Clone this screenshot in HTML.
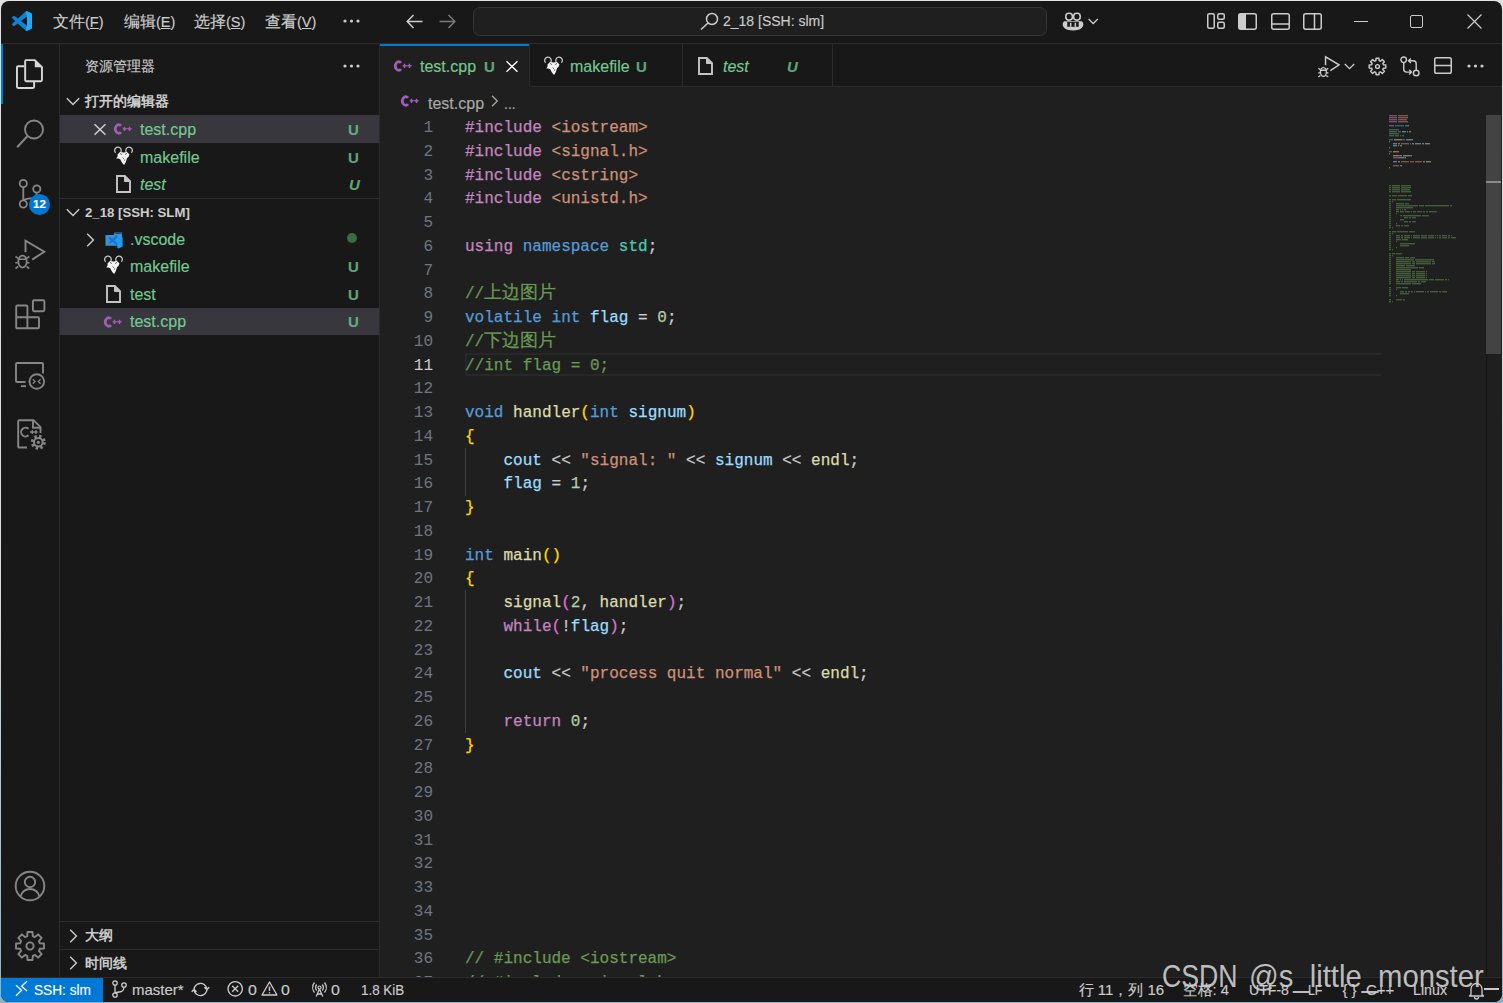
<!DOCTYPE html>
<html><head><meta charset="utf-8">
<style>
*{box-sizing:border-box;margin:0;padding:0}
html,body{width:1503px;height:1003px;overflow:hidden}
body{background:linear-gradient(#e2e2e2,#d8dadc 60%,#8eb0c6);position:relative;font-family:"Liberation Sans",sans-serif;color:#cccccc}
.a{position:absolute}
#win{position:absolute;left:1px;top:1px;width:1501px;height:1001px;background:#181818;border-radius:8px;overflow:hidden}
.t{position:absolute;white-space:pre;font-size:16px;line-height:20px;-webkit-text-stroke:0.15px}
.code{position:absolute;left:465px;-webkit-text-stroke:0.25px;font-family:"Liberation Mono",monospace;font-size:16.03px;white-space:pre;line-height:23.75px;color:#cccccc}
.ln{position:absolute;font-family:"Liberation Mono",monospace;font-size:16.03px;white-space:pre;line-height:23.75px;color:#6e7681;text-align:right;width:60px;left:373px}
.kw{color:#c586c0}.ty{color:#569cd6}.st{color:#ce9178}.nu{color:#b5cea8}.fn{color:#dcdcaa}.va{color:#9cdcfe}.ns{color:#4ec9b0}.cm{color:#6a9955}
.b1{color:#ffd700}.b2{color:#da70d6}.b3{color:#179fff}
.cj{font-size:17.5px;line-height:0}
svg{position:absolute;overflow:visible}
</style></head><body>
<div id="win"></div>

<div class="a" style="left:1px;top:43px;width:1501px;height:1px;background:#2b2b2b;"></div>
<div class="a" style="left:59px;top:44px;width:1px;height:933px;background:#2b2b2b;"></div>
<div class="a" style="left:379px;top:44px;width:1px;height:933px;background:#2b2b2b;"></div>
<div class="a" style="left:380px;top:86px;width:1122px;height:1px;background:#2b2b2b;"></div>
<div class="a" style="left:380px;top:87px;width:1122px;height:890px;background:#1f1f1f;"></div>
<div class="a" style="left:380px;top:44px;width:150px;height:43px;background:#1f1f1f;border-top:2px solid #0078d4"></div>
<div class="a" style="left:529px;top:44px;width:1px;height:42px;background:#2b2b2b;"></div>
<div class="a" style="left:682px;top:44px;width:1px;height:42px;background:#2b2b2b;"></div>
<div class="a" style="left:832px;top:44px;width:1px;height:42px;background:#2b2b2b;"></div>
<div class="a" style="left:60px;top:115px;width:319px;height:28px;background:#37373d;"></div>
<div class="a" style="left:60px;top:308px;width:319px;height:27px;background:#37373d;"></div>
<div class="a" style="left:60px;top:198px;width:319px;height:1px;background:#2b2b2b;"></div>
<div class="a" style="left:60px;top:921px;width:319px;height:1px;background:#2b2b2b;"></div>
<div class="a" style="left:60px;top:949px;width:319px;height:1px;background:#2b2b2b;"></div>
<div class="a" style="left:465px;top:353px;width:916px;height:23px;border:2px solid #282828;border-right:none"></div>
<div class="a" style="left:465px;top:448px;width:1px;height:48px;background:#404040;"></div>
<div class="a" style="left:465px;top:590px;width:1px;height:143px;background:#404040;"></div>
<div class="ln" style="top:117px">1
2
3
4
5
6
7
8
9
10
<span style="color:#cccccc">11</span>
12
13
14
15
16
17
18
19
20
21
22
23
24
25
26
27
28
29
30
31
32
33
34
35
36
37</div>
<div class="code" style="top:117px"><span class="kw">#include</span> <span class="st">&lt;iostream&gt;</span>
<span class="kw">#include</span> <span class="st">&lt;signal.h&gt;</span>
<span class="kw">#include</span> <span class="st">&lt;cstring&gt;</span>
<span class="kw">#include</span> <span class="st">&lt;unistd.h&gt;</span>

<span class="kw">using</span> <span class="ty">namespace</span> <span class="ns">std</span>;

<span class="cm">//<span class="cj">上边图片</span></span>
<span class="ty">volatile</span> <span class="ty">int</span> <span class="va">flag</span> = <span class="nu">0</span>;
<span class="cm">//<span class="cj">下边图片</span></span>
<span class="cm">//int flag = 0;</span>

<span class="ty">void</span> <span class="fn">handler</span><span class="b1">(</span><span class="ty">int</span> <span class="va">signum</span><span class="b1">)</span>
<span class="b1">{</span>
    <span class="va">cout</span> &lt;&lt; <span class="st">"signal: "</span> &lt;&lt; <span class="va">signum</span> &lt;&lt; <span class="fn">endl</span>;
    <span class="va">flag</span> = <span class="nu">1</span>;
<span class="b1">}</span>

<span class="ty">int</span> <span class="fn">main</span><span class="b1">()</span>
<span class="b1">{</span>
    <span class="fn">signal</span><span class="b2">(</span><span class="nu">2</span>, <span class="fn">handler</span><span class="b2">)</span>;
    <span class="kw">while</span><span class="b2">(</span>!<span class="va">flag</span><span class="b2">)</span>;

    <span class="va">cout</span> &lt;&lt; <span class="st">"process quit normal"</span> &lt;&lt; <span class="fn">endl</span>;

    <span class="kw">return</span> <span class="nu">0</span>;
<span class="b1">}</span>








<span class="cm">// #include &lt;iostream&gt;</span>
<span class="cm">// #include &lt;signal.h&gt;</span></div>
<svg style="left:1389px;top:115px" width="100" height="190" viewBox="0 0 100 190"><g opacity="0.5"><rect x="0" y="0" width="8" height="1.4" fill="#c586c0"/><rect x="9" y="0" width="10" height="1.4" fill="#ce9178"/><rect x="0" y="2" width="8" height="1.4" fill="#c586c0"/><rect x="9" y="2" width="10" height="1.4" fill="#ce9178"/><rect x="0" y="4" width="8" height="1.4" fill="#c586c0"/><rect x="9" y="4" width="9" height="1.4" fill="#ce9178"/><rect x="0" y="6" width="8" height="1.4" fill="#c586c0"/><rect x="9" y="6" width="10" height="1.4" fill="#ce9178"/><rect x="0" y="10" width="5" height="1.4" fill="#c586c0"/><rect x="6" y="10" width="9" height="1.4" fill="#569cd6"/><rect x="16" y="10" width="3" height="1.4" fill="#4ec9b0"/><rect x="19" y="10" width="1" height="1.4" fill="#cccccc"/><rect x="0" y="14" width="10" height="1.4" fill="#6a9955"/><rect x="0" y="16" width="8" height="1.4" fill="#569cd6"/><rect x="9" y="16" width="3" height="1.4" fill="#569cd6"/><rect x="13" y="16" width="4" height="1.4" fill="#9cdcfe"/><rect x="18" y="16" width="1" height="1.4" fill="#cccccc"/><rect x="20" y="16" width="1" height="1.4" fill="#b5cea8"/><rect x="21" y="16" width="1" height="1.4" fill="#cccccc"/><rect x="0" y="18" width="10" height="1.4" fill="#6a9955"/><rect x="0" y="20" width="5" height="1.4" fill="#6a9955"/><rect x="6" y="20" width="4" height="1.4" fill="#6a9955"/><rect x="11" y="20" width="1" height="1.4" fill="#6a9955"/><rect x="13" y="20" width="2" height="1.4" fill="#6a9955"/><rect x="0" y="24" width="4" height="1.4" fill="#569cd6"/><rect x="5" y="24" width="7" height="1.4" fill="#dcdcaa"/><rect x="12" y="24" width="1" height="1.4" fill="#ffd700"/><rect x="13" y="24" width="3" height="1.4" fill="#569cd6"/><rect x="17" y="24" width="6" height="1.4" fill="#9cdcfe"/><rect x="23" y="24" width="1" height="1.4" fill="#ffd700"/><rect x="0" y="26" width="1" height="1.4" fill="#ffd700"/><rect x="4" y="28" width="4" height="1.4" fill="#9cdcfe"/><rect x="9" y="28" width="2" height="1.4" fill="#cccccc"/><rect x="12" y="28" width="8" height="1.4" fill="#ce9178"/><rect x="21" y="28" width="1" height="1.4" fill="#ce9178"/><rect x="23" y="28" width="2" height="1.4" fill="#cccccc"/><rect x="26" y="28" width="6" height="1.4" fill="#9cdcfe"/><rect x="33" y="28" width="2" height="1.4" fill="#cccccc"/><rect x="36" y="28" width="4" height="1.4" fill="#dcdcaa"/><rect x="40" y="28" width="1" height="1.4" fill="#cccccc"/><rect x="4" y="30" width="4" height="1.4" fill="#9cdcfe"/><rect x="9" y="30" width="1" height="1.4" fill="#cccccc"/><rect x="11" y="30" width="1" height="1.4" fill="#b5cea8"/><rect x="12" y="30" width="1" height="1.4" fill="#cccccc"/><rect x="0" y="32" width="1" height="1.4" fill="#ffd700"/><rect x="0" y="36" width="3" height="1.4" fill="#569cd6"/><rect x="4" y="36" width="4" height="1.4" fill="#dcdcaa"/><rect x="8" y="36" width="2" height="1.4" fill="#ffd700"/><rect x="0" y="38" width="1" height="1.4" fill="#ffd700"/><rect x="4" y="40" width="6" height="1.4" fill="#dcdcaa"/><rect x="10" y="40" width="1" height="1.4" fill="#da70d6"/><rect x="11" y="40" width="1" height="1.4" fill="#b5cea8"/><rect x="12" y="40" width="1" height="1.4" fill="#cccccc"/><rect x="14" y="40" width="7" height="1.4" fill="#dcdcaa"/><rect x="21" y="40" width="1" height="1.4" fill="#da70d6"/><rect x="22" y="40" width="1" height="1.4" fill="#cccccc"/><rect x="4" y="42" width="5" height="1.4" fill="#c586c0"/><rect x="9" y="42" width="1" height="1.4" fill="#da70d6"/><rect x="10" y="42" width="1" height="1.4" fill="#cccccc"/><rect x="11" y="42" width="4" height="1.4" fill="#9cdcfe"/><rect x="15" y="42" width="1" height="1.4" fill="#da70d6"/><rect x="16" y="42" width="1" height="1.4" fill="#cccccc"/><rect x="4" y="46" width="4" height="1.4" fill="#9cdcfe"/><rect x="9" y="46" width="2" height="1.4" fill="#cccccc"/><rect x="12" y="46" width="8" height="1.4" fill="#ce9178"/><rect x="21" y="46" width="4" height="1.4" fill="#ce9178"/><rect x="26" y="46" width="7" height="1.4" fill="#ce9178"/><rect x="34" y="46" width="2" height="1.4" fill="#cccccc"/><rect x="37" y="46" width="4" height="1.4" fill="#dcdcaa"/><rect x="41" y="46" width="1" height="1.4" fill="#cccccc"/><rect x="4" y="50" width="6" height="1.4" fill="#c586c0"/><rect x="11" y="50" width="1" height="1.4" fill="#b5cea8"/><rect x="12" y="50" width="1" height="1.4" fill="#cccccc"/><rect x="0" y="52" width="1" height="1.4" fill="#ffd700"/><rect x="0" y="70" width="2" height="1.4" fill="#6a9955"/><rect x="3" y="70" width="8" height="1.4" fill="#6a9955"/><rect x="12" y="70" width="10" height="1.4" fill="#6a9955"/><rect x="0" y="72" width="2" height="1.4" fill="#6a9955"/><rect x="3" y="72" width="8" height="1.4" fill="#6a9955"/><rect x="12" y="72" width="10" height="1.4" fill="#6a9955"/><rect x="0" y="74" width="2" height="1.4" fill="#6a9955"/><rect x="3" y="74" width="8" height="1.4" fill="#6a9955"/><rect x="12" y="74" width="9" height="1.4" fill="#6a9955"/><rect x="0" y="76" width="2" height="1.4" fill="#6a9955"/><rect x="3" y="76" width="8" height="1.4" fill="#6a9955"/><rect x="12" y="76" width="10" height="1.4" fill="#6a9955"/><rect x="0" y="80" width="2" height="1.4" fill="#6a9955"/><rect x="3" y="80" width="5" height="1.4" fill="#6a9955"/><rect x="9" y="80" width="9" height="1.4" fill="#6a9955"/><rect x="19" y="80" width="4" height="1.4" fill="#6a9955"/><rect x="0" y="84" width="2" height="1.4" fill="#6a9955"/><rect x="3" y="84" width="4" height="1.4" fill="#6a9955"/><rect x="8" y="84" width="14" height="1.4" fill="#6a9955"/><rect x="0" y="86" width="2" height="1.4" fill="#6a9955"/><rect x="3" y="86" width="1" height="1.4" fill="#6a9955"/><rect x="0" y="88" width="2" height="1.4" fill="#6a9955"/><rect x="7" y="88" width="8" height="1.4" fill="#6a9955"/><rect x="16" y="88" width="4" height="1.4" fill="#6a9955"/><rect x="0" y="90" width="2" height="1.4" fill="#6a9955"/><rect x="7" y="90" width="22" height="1.4" fill="#6a9955"/><rect x="30" y="90" width="5" height="1.4" fill="#6a9955"/><rect x="36" y="90" width="24" height="1.4" fill="#6a9955"/><rect x="61" y="90" width="2" height="1.4" fill="#6a9955"/><rect x="0" y="92" width="2" height="1.4" fill="#6a9955"/><rect x="7" y="92" width="17" height="1.4" fill="#6a9955"/><rect x="0" y="94" width="2" height="1.4" fill="#6a9955"/><rect x="7" y="94" width="3" height="1.4" fill="#6a9955"/><rect x="11" y="94" width="1" height="1.4" fill="#6a9955"/><rect x="13" y="94" width="1" height="1.4" fill="#6a9955"/><rect x="15" y="94" width="2" height="1.4" fill="#6a9955"/><rect x="0" y="96" width="2" height="1.4" fill="#6a9955"/><rect x="7" y="96" width="3" height="1.4" fill="#6a9955"/><rect x="11" y="96" width="4" height="1.4" fill="#6a9955"/><rect x="16" y="96" width="5" height="1.4" fill="#6a9955"/><rect x="22" y="96" width="1" height="1.4" fill="#6a9955"/><rect x="24" y="96" width="3" height="1.4" fill="#6a9955"/><rect x="28" y="96" width="5" height="1.4" fill="#6a9955"/><rect x="34" y="96" width="2" height="1.4" fill="#6a9955"/><rect x="37" y="96" width="2" height="1.4" fill="#6a9955"/><rect x="40" y="96" width="8" height="1.4" fill="#6a9955"/><rect x="0" y="98" width="2" height="1.4" fill="#6a9955"/><rect x="7" y="98" width="1" height="1.4" fill="#6a9955"/><rect x="0" y="100" width="2" height="1.4" fill="#6a9955"/><rect x="11" y="100" width="2" height="1.4" fill="#6a9955"/><rect x="14" y="100" width="18" height="1.4" fill="#6a9955"/><rect x="33" y="100" width="7" height="1.4" fill="#6a9955"/><rect x="0" y="102" width="2" height="1.4" fill="#6a9955"/><rect x="15" y="102" width="4" height="1.4" fill="#6a9955"/><rect x="20" y="102" width="2" height="1.4" fill="#6a9955"/><rect x="23" y="102" width="4" height="1.4" fill="#6a9955"/><rect x="0" y="104" width="2" height="1.4" fill="#6a9955"/><rect x="11" y="104" width="4" height="1.4" fill="#6a9955"/><rect x="0" y="106" width="2" height="1.4" fill="#6a9955"/><rect x="15" y="106" width="4" height="1.4" fill="#6a9955"/><rect x="20" y="106" width="2" height="1.4" fill="#6a9955"/><rect x="23" y="106" width="4" height="1.4" fill="#6a9955"/><rect x="0" y="108" width="2" height="1.4" fill="#6a9955"/><rect x="7" y="108" width="1" height="1.4" fill="#6a9955"/><rect x="0" y="110" width="2" height="1.4" fill="#6a9955"/><rect x="7" y="110" width="4" height="1.4" fill="#6a9955"/><rect x="12" y="110" width="2" height="1.4" fill="#6a9955"/><rect x="15" y="110" width="5" height="1.4" fill="#6a9955"/><rect x="0" y="112" width="2" height="1.4" fill="#6a9955"/><rect x="3" y="112" width="1" height="1.4" fill="#6a9955"/><rect x="0" y="116" width="2" height="1.4" fill="#6a9955"/><rect x="3" y="116" width="4" height="1.4" fill="#6a9955"/><rect x="8" y="116" width="11" height="1.4" fill="#6a9955"/><rect x="20" y="116" width="6" height="1.4" fill="#6a9955"/><rect x="0" y="118" width="2" height="1.4" fill="#6a9955"/><rect x="3" y="118" width="1" height="1.4" fill="#6a9955"/><rect x="0" y="120" width="2" height="1.4" fill="#6a9955"/><rect x="7" y="120" width="4" height="1.4" fill="#6a9955"/><rect x="12" y="120" width="2" height="1.4" fill="#6a9955"/><rect x="15" y="120" width="6" height="1.4" fill="#6a9955"/><rect x="22" y="120" width="1" height="1.4" fill="#6a9955"/><rect x="24" y="120" width="7" height="1.4" fill="#6a9955"/><rect x="32" y="120" width="6" height="1.4" fill="#6a9955"/><rect x="39" y="120" width="6" height="1.4" fill="#6a9955"/><rect x="46" y="120" width="1" height="1.4" fill="#6a9955"/><rect x="48" y="120" width="1" height="1.4" fill="#6a9955"/><rect x="50" y="120" width="2" height="1.4" fill="#6a9955"/><rect x="53" y="120" width="5" height="1.4" fill="#6a9955"/><rect x="59" y="120" width="2" height="1.4" fill="#6a9955"/><rect x="62" y="120" width="1" height="1.4" fill="#6a9955"/><rect x="0" y="122" width="2" height="1.4" fill="#6a9955"/><rect x="7" y="122" width="4" height="1.4" fill="#6a9955"/><rect x="12" y="122" width="2" height="1.4" fill="#6a9955"/><rect x="15" y="122" width="6" height="1.4" fill="#6a9955"/><rect x="22" y="122" width="1" height="1.4" fill="#6a9955"/><rect x="24" y="122" width="7" height="1.4" fill="#6a9955"/><rect x="32" y="122" width="6" height="1.4" fill="#6a9955"/><rect x="39" y="122" width="6" height="1.4" fill="#6a9955"/><rect x="46" y="122" width="1" height="1.4" fill="#6a9955"/><rect x="48" y="122" width="1" height="1.4" fill="#6a9955"/><rect x="50" y="122" width="2" height="1.4" fill="#6a9955"/><rect x="53" y="122" width="5" height="1.4" fill="#6a9955"/><rect x="59" y="122" width="2" height="1.4" fill="#6a9955"/><rect x="62" y="122" width="5" height="1.4" fill="#6a9955"/><rect x="0" y="124" width="2" height="1.4" fill="#6a9955"/><rect x="7" y="124" width="5" height="1.4" fill="#6a9955"/><rect x="13" y="124" width="6" height="1.4" fill="#6a9955"/><rect x="0" y="126" width="2" height="1.4" fill="#6a9955"/><rect x="7" y="126" width="1" height="1.4" fill="#6a9955"/><rect x="0" y="128" width="2" height="1.4" fill="#6a9955"/><rect x="11" y="128" width="15" height="1.4" fill="#6a9955"/><rect x="0" y="130" width="2" height="1.4" fill="#6a9955"/><rect x="11" y="130" width="9" height="1.4" fill="#6a9955"/><rect x="0" y="132" width="2" height="1.4" fill="#6a9955"/><rect x="7" y="132" width="1" height="1.4" fill="#6a9955"/><rect x="0" y="134" width="2" height="1.4" fill="#6a9955"/><rect x="3" y="134" width="1" height="1.4" fill="#6a9955"/><rect x="0" y="138" width="2" height="1.4" fill="#6a9955"/><rect x="3" y="138" width="3" height="1.4" fill="#6a9955"/><rect x="7" y="138" width="6" height="1.4" fill="#6a9955"/><rect x="0" y="140" width="2" height="1.4" fill="#6a9955"/><rect x="3" y="140" width="1" height="1.4" fill="#6a9955"/><rect x="0" y="142" width="2" height="1.4" fill="#6a9955"/><rect x="7" y="142" width="8" height="1.4" fill="#6a9955"/><rect x="16" y="142" width="4" height="1.4" fill="#6a9955"/><rect x="21" y="142" width="5" height="1.4" fill="#6a9955"/><rect x="0" y="144" width="2" height="1.4" fill="#6a9955"/><rect x="7" y="144" width="18" height="1.4" fill="#6a9955"/><rect x="26" y="144" width="19" height="1.4" fill="#6a9955"/><rect x="0" y="146" width="2" height="1.4" fill="#6a9955"/><rect x="7" y="146" width="15" height="1.4" fill="#6a9955"/><rect x="23" y="146" width="3" height="1.4" fill="#6a9955"/><rect x="27" y="146" width="15" height="1.4" fill="#6a9955"/><rect x="43" y="146" width="3" height="1.4" fill="#6a9955"/><rect x="0" y="148" width="2" height="1.4" fill="#6a9955"/><rect x="7" y="148" width="15" height="1.4" fill="#6a9955"/><rect x="23" y="148" width="3" height="1.4" fill="#6a9955"/><rect x="27" y="148" width="15" height="1.4" fill="#6a9955"/><rect x="43" y="148" width="3" height="1.4" fill="#6a9955"/><rect x="0" y="150" width="2" height="1.4" fill="#6a9955"/><rect x="7" y="150" width="9" height="1.4" fill="#6a9955"/><rect x="17" y="150" width="9" height="1.4" fill="#6a9955"/><rect x="0" y="152" width="2" height="1.4" fill="#6a9955"/><rect x="7" y="152" width="22" height="1.4" fill="#6a9955"/><rect x="30" y="152" width="5" height="1.4" fill="#6a9955"/><rect x="0" y="154" width="2" height="1.4" fill="#6a9955"/><rect x="7" y="154" width="15" height="1.4" fill="#6a9955"/><rect x="0" y="156" width="2" height="1.4" fill="#6a9955"/><rect x="7" y="156" width="15" height="1.4" fill="#6a9955"/><rect x="23" y="156" width="3" height="1.4" fill="#6a9955"/><rect x="27" y="156" width="9" height="1.4" fill="#6a9955"/><rect x="37" y="156" width="1" height="1.4" fill="#6a9955"/><rect x="0" y="158" width="2" height="1.4" fill="#6a9955"/><rect x="7" y="158" width="15" height="1.4" fill="#6a9955"/><rect x="23" y="158" width="3" height="1.4" fill="#6a9955"/><rect x="27" y="158" width="9" height="1.4" fill="#6a9955"/><rect x="37" y="158" width="1" height="1.4" fill="#6a9955"/><rect x="0" y="160" width="2" height="1.4" fill="#6a9955"/><rect x="7" y="160" width="15" height="1.4" fill="#6a9955"/><rect x="23" y="160" width="3" height="1.4" fill="#6a9955"/><rect x="27" y="160" width="9" height="1.4" fill="#6a9955"/><rect x="37" y="160" width="1" height="1.4" fill="#6a9955"/><rect x="0" y="162" width="2" height="1.4" fill="#6a9955"/><rect x="7" y="162" width="15" height="1.4" fill="#6a9955"/><rect x="23" y="162" width="3" height="1.4" fill="#6a9955"/><rect x="27" y="162" width="9" height="1.4" fill="#6a9955"/><rect x="37" y="162" width="1" height="1.4" fill="#6a9955"/><rect x="0" y="164" width="2" height="1.4" fill="#6a9955"/><rect x="7" y="164" width="3" height="1.4" fill="#6a9955"/><rect x="11" y="164" width="1" height="1.4" fill="#6a9955"/><rect x="13" y="164" width="1" height="1.4" fill="#6a9955"/><rect x="15" y="164" width="24" height="1.4" fill="#6a9955"/><rect x="40" y="164" width="5" height="1.4" fill="#6a9955"/><rect x="46" y="164" width="9" height="1.4" fill="#6a9955"/><rect x="56" y="164" width="2" height="1.4" fill="#6a9955"/><rect x="59" y="164" width="1" height="1.4" fill="#6a9955"/><rect x="0" y="166" width="2" height="1.4" fill="#6a9955"/><rect x="7" y="166" width="4" height="1.4" fill="#6a9955"/><rect x="12" y="166" width="2" height="1.4" fill="#6a9955"/><rect x="15" y="166" width="13" height="1.4" fill="#6a9955"/><rect x="29" y="166" width="2" height="1.4" fill="#6a9955"/><rect x="32" y="166" width="5" height="1.4" fill="#6a9955"/><rect x="0" y="168" width="2" height="1.4" fill="#6a9955"/><rect x="7" y="168" width="15" height="1.4" fill="#6a9955"/><rect x="23" y="168" width="9" height="1.4" fill="#6a9955"/><rect x="0" y="172" width="2" height="1.4" fill="#6a9955"/><rect x="7" y="172" width="5" height="1.4" fill="#6a9955"/><rect x="13" y="172" width="6" height="1.4" fill="#6a9955"/><rect x="0" y="174" width="2" height="1.4" fill="#6a9955"/><rect x="7" y="174" width="1" height="1.4" fill="#6a9955"/><rect x="0" y="176" width="2" height="1.4" fill="#6a9955"/><rect x="11" y="176" width="4" height="1.4" fill="#6a9955"/><rect x="16" y="176" width="2" height="1.4" fill="#6a9955"/><rect x="19" y="176" width="2" height="1.4" fill="#6a9955"/><rect x="22" y="176" width="2" height="1.4" fill="#6a9955"/><rect x="25" y="176" width="1" height="1.4" fill="#6a9955"/><rect x="27" y="176" width="8" height="1.4" fill="#6a9955"/><rect x="36" y="176" width="1" height="1.4" fill="#6a9955"/><rect x="38" y="176" width="2" height="1.4" fill="#6a9955"/><rect x="41" y="176" width="8" height="1.4" fill="#6a9955"/><rect x="50" y="176" width="2" height="1.4" fill="#6a9955"/><rect x="53" y="176" width="5" height="1.4" fill="#6a9955"/><rect x="0" y="178" width="2" height="1.4" fill="#6a9955"/><rect x="11" y="178" width="9" height="1.4" fill="#6a9955"/><rect x="0" y="180" width="2" height="1.4" fill="#6a9955"/><rect x="7" y="180" width="1" height="1.4" fill="#6a9955"/><rect x="0" y="184" width="2" height="1.4" fill="#6a9955"/><rect x="7" y="184" width="6" height="1.4" fill="#6a9955"/><rect x="14" y="184" width="2" height="1.4" fill="#6a9955"/><rect x="0" y="186" width="2" height="1.4" fill="#6a9955"/><rect x="3" y="186" width="1" height="1.4" fill="#6a9955"/></g></svg>
<div class="a" style="left:1486px;top:115px;width:15px;height:239px;background:#434343;"></div>
<div class="a" style="left:1486px;top:181px;width:15px;height:2px;background:#8a8a8a;"></div>
<div class="a" style="left:1486px;top:354px;width:1px;height:623px;background:#141414;"></div>
<div class="a" style="left:1px;top:977px;width:1501px;height:1px;background:#2b2b2b;"></div>
<div class="a" style="left:1px;top:978px;width:102px;height:24px;background:#0078d4;border-bottom-left-radius:8px"></div>
<div class="a" style="left:103px;top:978px;width:1399px;height:24px;background:#181818;border-bottom-right-radius:8px"></div>
<svg style="left:12px;top:11px" width="20" height="20" viewBox="0 0 100 100"><path fill="#0b84d8" d="M96.46 10.8L75.86.87a6.2 6.2 0 0 0-7.08 1.2L29.35 38.04 12.19 25.01a4.140 4.14 0 0 0-5.29.24l-5.5 5a4.14 4.14 0 0 0 0 6.14L16.25 50 1.36 63.58a4.14 4.14 0 0 0 0 6.14l5.5 5a4.14 4.14 0 0 0 5.29.24l17.16-13.03 39.43 35.96a6.2 6.2 0 0 0 7.08 1.2l20.6-9.91A6.2 6.2 0 0 0 100 83.59V16.41a6.2 6.2 0 0 0-3.54-5.61zM75.02 72.7L45.1 50l29.91-22.7z"/><path fill="#24a9f2" d="M68.77 97.92a6.2 6.2 0 0 0 7.1 1.2l20.59-9.9A6.2 6.2 0 0 0 100 83.59V16.41a6.2 6.2 0 0 0-3.54-5.61L75.86.87a6.2 6.2 0 0 0-7.09 1.21L75.02 27.3v45.4z"/></svg>
<div class="t" style="left:53px;top:12px">文件<span style="font-size:14.5px">(<u>F</u>)</span></div>
<div class="t" style="left:124px;top:12px">编辑<span style="font-size:14.5px">(<u>E</u>)</span></div>
<div class="t" style="left:194px;top:12px">选择<span style="font-size:14.5px">(<u>S</u>)</span></div>
<div class="t" style="left:265px;top:12px">查看<span style="font-size:14.5px">(<u>V</u>)</span></div>
<svg style="left:343px;top:19px" width="17" height="4" viewBox="0 0 17 4"><circle cx="2" cy="2" r="1.6" fill="#cccccc"/><circle cx="8.5" cy="2" r="1.6" fill="#cccccc"/><circle cx="15" cy="2" r="1.6" fill="#cccccc"/></svg>
<svg style="left:406px;top:14px" width="17" height="15" viewBox="0 0 17 15"><path d="M16.5 7.5H1.5M7.5 1L1.2 7.5 7.5 14" fill="none" stroke="#cccccc" stroke-width="1.5"/></svg>
<svg style="left:439px;top:14px" width="17" height="15" viewBox="0 0 17 15"><path d="M0.5 7.5H15.5M9.5 1L15.8 7.5 9.5 14" fill="none" stroke="#7a7a7a" stroke-width="1.5"/></svg>
<div class="a" style="left:473px;top:7px;width:574px;height:29px;border:1px solid #353535;background:#1f1f1f;border-radius:7px"></div>
<svg style="left:700px;top:12px" width="19" height="18" viewBox="0 0 19 18"><circle cx="12" cy="7" r="5.5" fill="none" stroke="#cccccc" stroke-width="1.5"/><path d="M8 11L1 17.5" stroke="#cccccc" stroke-width="1.6" fill="none"/></svg>
<div class="t" style="left:723px;top:11px;font-size:14px">2_18 [SSH: slm]</div>
<svg style="left:1062px;top:11.5px" width="22" height="19" viewBox="0 0 22 19"><path d="M2.2 9.2C1 10 .7 11.3.7 12.8c0 2.8 3.5 5.7 10.3 5.7s10.3-2.9 10.3-5.7c0-1.5-.3-2.8-1.5-3.6z" fill="#cccccc"/><rect x="3.8" y="1.3" width="6.6" height="6.8" rx="3" fill="#181818" stroke="#cccccc" stroke-width="1.6"/><rect x="11.6" y="1.3" width="6.6" height="6.8" rx="3" fill="#181818" stroke="#cccccc" stroke-width="1.6"/><rect x="5.3" y="9.9" width="11.4" height="4.9" fill="#181818"/><rect x="7.9" y="10.7" width="1.5" height="4.1" fill="#cccccc"/><rect x="12.6" y="10.7" width="1.5" height="4.1" fill="#cccccc"/></svg>
<svg style="left:1088px;top:17.5px" width="11" height="7" viewBox="0 0 11 7"><path d="M0.6 1L5.2 5.5 9.8 1" fill="none" stroke="#cccccc" stroke-width="1.3"/></svg>
<svg style="left:1207px;top:13px" width="18" height="16" viewBox="0 0 18 16"><rect x="0.75" y="0.75" width="6.5" height="14.5" rx="1.5" fill="none" stroke="#cccccc" stroke-width="1.5"/><rect x="10.75" y="0.75" width="6.5" height="5.5" rx="1.5" fill="none" stroke="#cccccc" stroke-width="1.5"/><rect x="10.75" y="9.25" width="6.5" height="6" rx="1.5" fill="none" stroke="#cccccc" stroke-width="1.5"/></svg>
<svg style="left:1238px;top:13px" width="19" height="17" viewBox="0 0 19 17"><rect x="0.75" y="0.75" width="17.5" height="15.5" rx="2" fill="none" stroke="#cccccc" stroke-width="1.5"/><rect x="1" y="1" width="7" height="15" fill="#cccccc"/></svg>
<svg style="left:1271px;top:13px" width="19" height="17" viewBox="0 0 19 17"><rect x="0.75" y="0.75" width="17.5" height="15.5" rx="2" fill="none" stroke="#cccccc" stroke-width="1.5"/><path d="M1 11H18" stroke="#cccccc" stroke-width="1.5"/></svg>
<svg style="left:1303px;top:13px" width="19" height="17" viewBox="0 0 19 17"><rect x="0.75" y="0.75" width="17.5" height="15.5" rx="2" fill="none" stroke="#cccccc" stroke-width="1.5"/><path d="M11.5 1V16" stroke="#cccccc" stroke-width="1.5"/></svg>
<div class="a" style="left:1354px;top:21px;width:14px;height:1px;background:#cccccc;"></div>
<div class="a" style="left:1410px;top:15px;width:13px;height:13px;border:1px solid #cccccc;border-radius:2px"></div>
<svg style="left:1467px;top:14px" width="15" height="15" viewBox="0 0 15 15"><path d="M0.5 0.5L14.5 14.5M14.5 0.5L0.5 14.5" stroke="#cccccc" stroke-width="1.2"/></svg>
<div class="a" style="left:1px;top:44px;width:2px;height:60px;background:#0078d4;"></div>
<svg style="left:16px;top:59px" width="27" height="30" viewBox="0 0 28 31"><path d="M8.5 7.5H2.2C1.5 7.5 1 8 1 8.7v20.1c0 .7.5 1.2 1.2 1.2H17.6c.7 0 1.2-.5 1.2-1.2V23" fill="none" stroke="#d7d7d7" stroke-width="2"/><path d="M9.5 1.1H19.5L26.9 8.5V21.8c0 .7-.5 1.2-1.2 1.2H10.7c-.7 0-1.2-.5-1.2-1.2V2.3c0-.7.5-1.2 1.2-1.2z" fill="none" stroke="#d7d7d7" stroke-width="2"/><path d="M19.5 1.5V8.5H26.5z" fill="#d7d7d7"/></svg>
<svg style="left:16px;top:119px" width="30" height="30" viewBox="0 0 30 30"><circle cx="18" cy="10.5" r="9" fill="none" stroke="#868686" stroke-width="1.9"/><path d="M11.5 17L1.2 28.2" stroke="#868686" stroke-width="2" fill="none"/></svg>
<svg style="left:18px;top:178px" width="24" height="30" viewBox="0 0 24 30"><circle cx="5.3" cy="5.5" r="3.6" fill="none" stroke="#868686" stroke-width="1.8"/><circle cx="18.8" cy="11" r="3.6" fill="none" stroke="#868686" stroke-width="1.8"/><circle cx="5.3" cy="26" r="3.6" fill="none" stroke="#868686" stroke-width="1.8"/><path d="M5.3 9.1V22.4M18.8 14.6c0 4-2.2 5.5-6 5.8-3.5.3-6 .8-7.5 2.2" fill="none" stroke="#868686" stroke-width="1.8"/></svg>
<div class="a" style="left:29px;top:194px;width:21px;height:21px;border-radius:50%;background:#0078d4"></div>
<div class="t" style="left:29px;top:194px;width:21px;text-align:center;font-size:11.5px;font-weight:bold;line-height:21px;color:#ffffff">12</div>
<svg style="left:15px;top:238px" width="31" height="32" viewBox="0 0 31 32"><path d="M10.5 14.3V2.6L29.3 13.7 17.2 21.6" fill="none" stroke="#868686" stroke-width="1.9" stroke-linejoin="miter"/><ellipse cx="7.5" cy="23.6" rx="4.2" ry="6" fill="none" stroke="#868686" stroke-width="1.8"/><path d="M3 21.2H11.8M0.5 18.5L3.2 20.3M14.3 18.5L11.6 20.3M0.3 24.8H2.8M14.5 24.8H12M0.5 30.5L3.2 28.5M14.3 30.5L11.6 28.5" stroke="#868686" stroke-width="1.6" fill="none"/></svg>
<svg style="left:15px;top:299px" width="31" height="31" viewBox="0 0 31 31"><path d="M2.2 6.5H11.4c.6 0 1 .4 1 1V18.2H23c.6 0 1 .4 1 1v9.1c0 .6-.4 1-1 1H2.2c-.6 0-1-.4-1-1V7.5c0-.6.4-1 1-1zM1.2 18.2H12.4V29.3" fill="none" stroke="#868686" stroke-width="1.9"/><rect x="17.9" y="1.2" width="11.5" height="11" rx="1.2" fill="none" stroke="#868686" stroke-width="1.9"/></svg>
<svg style="left:15px;top:362px" width="30" height="28" viewBox="0 0 30 28"><path d="M10.5 20H2c-.6 0-1-.4-1-1V2c0-.6.4-1 1-1h25c.6 0 1 .4 1 1v9.5" fill="none" stroke="#868686" stroke-width="1.9"/><path d="M6 24.2H11" stroke="#868686" stroke-width="1.9"/><circle cx="21.8" cy="19.5" r="7.3" fill="none" stroke="#868686" stroke-width="1.9"/><path d="M17.8 17.2l2.3 2.2-2.3 2.3M25.6 17.2l-2.3 2.2 2.3 2.3" fill="none" stroke="#868686" stroke-width="1.3"/></svg>
<svg style="left:17px;top:419px" width="29" height="31" viewBox="0 0 29 31"><path d="M10 28.5H2.2c-.6 0-1-.4-1-1V2.2c0-.6.4-1 1-1H16.5L23.5 8.2V14" fill="none" stroke="#868686" stroke-width="1.9"/><path d="M16 1.5V8.7H23.2" fill="none" stroke="#868686" stroke-width="1.9"/><path d="M11.5 9.8a4.4 4.4 0 1 0 0 6.5" fill="none" stroke="#868686" stroke-width="1.9"/><path d="M13 13h7.5M15.3 11v4M19 11v4" stroke="#868686" stroke-width="1.3"/><circle cx="21.3" cy="23.3" r="5.8" fill="none" stroke="#868686" stroke-width="3.4" stroke-dasharray="2.3 2.26"/><circle cx="21.3" cy="23.3" r="4.3" fill="none" stroke="#868686" stroke-width="2"/><circle cx="21.3" cy="23.3" r="1.6" fill="#868686"/></svg>
<svg style="left:14px;top:870px" width="32" height="32" viewBox="0 0 32 32"><circle cx="16" cy="16" r="14.3" fill="none" stroke="#868686" stroke-width="1.9"/><circle cx="16" cy="12" r="5.2" fill="none" stroke="#868686" stroke-width="1.9"/><path d="M6.5 26.3c1.5-4.6 5.2-7.3 9.5-7.3s8 2.7 9.5 7.3" fill="none" stroke="#868686" stroke-width="1.9"/></svg>
<svg style="left:14px;top:930px" width="32" height="32" viewBox="0 0 32 32"><circle cx="16" cy="16" r="3.6" fill="none" stroke="#868686" stroke-width="1.9"/><path d="M13.19 6.20L13.53 2.02L18.47 2.02L18.81 6.20L20.95 7.08L24.14 4.37L27.63 7.86L24.92 11.05L25.80 13.19L29.98 13.53L29.98 18.47L25.80 18.81L24.92 20.95L27.63 24.14L24.14 27.63L20.95 24.92L18.81 25.80L18.47 29.98L13.53 29.98L13.19 25.80L11.05 24.92L7.86 27.63L4.37 24.14L7.08 20.95L6.20 18.81L2.02 18.47L2.02 13.53L6.20 13.19L7.08 11.05L4.37 7.86L7.86 4.37L11.05 7.08z" fill="none" stroke="#868686" stroke-width="1.9" stroke-linejoin="round"/></svg>
<div class="t" style="left:85px;top:57px;font-size:13.75px;">资源管理器</div>
<svg style="left:343px;top:64px" width="17" height="4" viewBox="0 0 17 4"><circle cx="2" cy="2" r="1.6" fill="#cccccc"/><circle cx="8.5" cy="2" r="1.6" fill="#cccccc"/><circle cx="15" cy="2" r="1.6" fill="#cccccc"/></svg>
<svg style="left:66px;top:97px" width="14" height="9" viewBox="0 0 14 9"><path d="M0.8 1.2L7 7.4 13.2 1.2" fill="none" stroke="#cccccc" stroke-width="1.4"/></svg>
<div class="t" style="left:85px;top:92px;font-size:13.75px;font-weight:bold;-webkit-text-stroke:0">打开的编辑器</div>
<svg style="left:94px;top:124px" width="12" height="11" viewBox="0 0 12 11"><path d="M0.5 0.3L11.5 10.7M11.5 0.3L0.5 10.7" stroke="#d0d0d0" stroke-width="1.5"/></svg>
<svg style="left:114px;top:123px" width="18" height="12" viewBox="0 0 18 12"><path d="M7 2.9A3.3 4.3 0 1 0 7 9.1" fill="none" stroke="#a35cb6" stroke-width="2.8"/><path d="M8.6 5.8H17.8" stroke="#a35cb6" stroke-width="1.1"/><path d="M10.5 3.7V7.9M15.5 3.7V7.9M9.2 5.8H11.8M14.2 5.8H16.8" stroke="#a35cb6" stroke-width="1.5" fill="none"/></svg>
<div class="t" style="left:140px;top:120.30000000000001px;font-size:16px;color:#73c991">test.cpp</div>
<div class="t" style="left:348px;top:120.30000000000001px;font-size:15px;color:rgba(115,201,145,0.8);font-weight:bold">U</div>
<svg style="left:114px;top:147px" width="19" height="18" viewBox="0 0 19 18"><path d="M5.8 6.2A3.3 3.3 0 1 0 1.6 5.8M13.2 6.2A3.3 3.3 0 1 1 17.4 5.8" fill="none" stroke="#c8c8c8" stroke-width="1.3"/><path d="M3.6 7.2L6.2 4.9 9.5 5.6 12.8 4.9 15.4 7.2 14.8 9.6 13 11.2 12 14.5 10.6 17.6 9.4 17.6 7.6 15 6.2 12.2 4.2 11.6 2.3 11.4 3.6 9.3z" fill="#f2f2f2"/><path d="M6 6.4l2 1.2M13 6.4l-2 1.2M8.6 10.5l1.6 1.5M10 13.5l1.2-.8" fill="none" stroke="#5a5a5a" stroke-width=".9"/></svg>
<div class="t" style="left:140px;top:147.8px;font-size:16px;color:#73c991">makefile</div>
<div class="t" style="left:348px;top:147.8px;font-size:15px;color:rgba(115,201,145,0.8);font-weight:bold">U</div>
<svg style="left:116px;top:175px" width="15" height="18" viewBox="0 0 15 18"><path d="M1 1H8.8L14 6.2V17H1z" fill="none" stroke="#c5c5c5" stroke-width="1.9" stroke-linejoin="miter"/><path d="M8.5 1V6.5H14" fill="#c5c5c5" stroke="#c5c5c5" stroke-width="1"/></svg>
<div class="t" style="left:140px;top:175.3px;font-size:16px;color:#73c991;font-style:italic">test</div>
<div class="t" style="left:349px;top:175.3px;font-size:15px;color:rgba(115,201,145,0.8);font-weight:bold;font-style:italic">U</div>
<svg style="left:66px;top:208px" width="14" height="9" viewBox="0 0 14 9"><path d="M0.8 1.2L7 7.4 13.2 1.2" fill="none" stroke="#cccccc" stroke-width="1.4"/></svg>
<div class="t" style="left:85px;top:203px;font-size:13.2px;font-weight:bold;-webkit-text-stroke:0">2_18 [SSH: SLM]</div>
<svg style="left:86px;top:232.5px" width="9" height="14" viewBox="0 0 9 14"><path d="M1.2 0.8L7.4 7 1.2 13.2" fill="none" stroke="#cccccc" stroke-width="1.4"/></svg>
<svg style="left:105px;top:232px" width="18" height="17" viewBox="0 0 18 17"><path d="M0.5 3H8.6L9.6 0.4H17V13.8H0.5z" fill="#3f8fd6"/><path d="M10.3 1.3H16.3" stroke="#1b2a3a" stroke-width=".8"/><path d="M4.3 5.6L12.6 12.6M4.3 11L12.6 3.8" stroke="#0c78cf" stroke-width="2.2"/><path d="M12.3 3.2L17.6 5.6V14.6L13.4 16.6L12.3 15.8z" fill="#1d9ef2"/></svg>
<div class="t" style="left:130px;top:229.9px;font-size:16px;color:#73c991">.vscode</div>
<div class="a" style="left:347px;top:233px;width:10px;height:10px;border-radius:50%;background:#3a6a48"></div>
<svg style="left:104px;top:256px" width="19" height="18" viewBox="0 0 19 18"><path d="M5.8 6.2A3.3 3.3 0 1 0 1.6 5.8M13.2 6.2A3.3 3.3 0 1 1 17.4 5.8" fill="none" stroke="#c8c8c8" stroke-width="1.3"/><path d="M3.6 7.2L6.2 4.9 9.5 5.6 12.8 4.9 15.4 7.2 14.8 9.6 13 11.2 12 14.5 10.6 17.6 9.4 17.6 7.6 15 6.2 12.2 4.2 11.6 2.3 11.4 3.6 9.3z" fill="#f2f2f2"/><path d="M6 6.4l2 1.2M13 6.4l-2 1.2M8.6 10.5l1.6 1.5M10 13.5l1.2-.8" fill="none" stroke="#5a5a5a" stroke-width=".9"/></svg>
<div class="t" style="left:130px;top:257.4px;font-size:16px;color:#73c991">makefile</div>
<div class="t" style="left:348px;top:257.4px;font-size:15px;color:rgba(115,201,145,0.8);font-weight:bold">U</div>
<svg style="left:106px;top:285px" width="15" height="18" viewBox="0 0 15 18"><path d="M1 1H8.8L14 6.2V17H1z" fill="none" stroke="#c5c5c5" stroke-width="1.9" stroke-linejoin="miter"/><path d="M8.5 1V6.5H14" fill="#c5c5c5" stroke="#c5c5c5" stroke-width="1"/></svg>
<div class="t" style="left:130px;top:284.9px;font-size:16px;color:#73c991">test</div>
<div class="t" style="left:348px;top:284.9px;font-size:15px;color:rgba(115,201,145,0.8);font-weight:bold">U</div>
<svg style="left:104px;top:316px" width="18" height="12" viewBox="0 0 18 12"><path d="M7 2.9A3.3 4.3 0 1 0 7 9.1" fill="none" stroke="#a35cb6" stroke-width="2.8"/><path d="M8.6 5.8H17.8" stroke="#a35cb6" stroke-width="1.1"/><path d="M10.5 3.7V7.9M15.5 3.7V7.9M9.2 5.8H11.8M14.2 5.8H16.8" stroke="#a35cb6" stroke-width="1.5" fill="none"/></svg>
<div class="t" style="left:130px;top:312.4px;font-size:16px;color:#73c991">test.cpp</div>
<div class="t" style="left:348px;top:312.4px;font-size:15px;color:rgba(115,201,145,0.8);font-weight:bold">U</div>
<svg style="left:69px;top:929px" width="9" height="14" viewBox="0 0 9 14"><path d="M1.2 0.8L7.4 7 1.2 13.2" fill="none" stroke="#cccccc" stroke-width="1.4"/></svg>
<div class="t" style="left:85px;top:926px;font-size:13.75px;font-weight:bold;-webkit-text-stroke:0">大纲</div>
<svg style="left:69px;top:956px" width="9" height="14" viewBox="0 0 9 14"><path d="M1.2 0.8L7.4 7 1.2 13.2" fill="none" stroke="#cccccc" stroke-width="1.4"/></svg>
<div class="t" style="left:85px;top:954px;font-size:13.75px;font-weight:bold;-webkit-text-stroke:0">时间线</div>
<svg style="left:394px;top:60px" width="18" height="12" viewBox="0 0 18 12"><path d="M7 2.9A3.3 4.3 0 1 0 7 9.1" fill="none" stroke="#a35cb6" stroke-width="2.8"/><path d="M8.6 5.8H17.8" stroke="#a35cb6" stroke-width="1.1"/><path d="M10.5 3.7V7.9M15.5 3.7V7.9M9.2 5.8H11.8M14.2 5.8H16.8" stroke="#a35cb6" stroke-width="1.5" fill="none"/></svg>
<div class="t" style="left:420px;top:57px;font-size:16px;color:#73c991">test.cpp</div>
<div class="t" style="left:484px;top:57px;font-size:15px;color:rgba(115,201,145,0.8);font-weight:bold">U</div>
<svg style="left:506px;top:61px" width="12" height="11" viewBox="0 0 12 11"><path d="M0.5 0.3L11.5 10.7M11.5 0.3L0.5 10.7" stroke="#ffffff" stroke-width="1.4"/></svg>
<svg style="left:544px;top:57px" width="19" height="18" viewBox="0 0 19 18"><path d="M5.8 6.2A3.3 3.3 0 1 0 1.6 5.8M13.2 6.2A3.3 3.3 0 1 1 17.4 5.8" fill="none" stroke="#c8c8c8" stroke-width="1.3"/><path d="M3.6 7.2L6.2 4.9 9.5 5.6 12.8 4.9 15.4 7.2 14.8 9.6 13 11.2 12 14.5 10.6 17.6 9.4 17.6 7.6 15 6.2 12.2 4.2 11.6 2.3 11.4 3.6 9.3z" fill="#f2f2f2"/><path d="M6 6.4l2 1.2M13 6.4l-2 1.2M8.6 10.5l1.6 1.5M10 13.5l1.2-.8" fill="none" stroke="#5a5a5a" stroke-width=".9"/></svg>
<div class="t" style="left:570px;top:57px;font-size:16px;color:#73c991">makefile</div>
<div class="t" style="left:636px;top:57px;font-size:15px;color:rgba(115,201,145,0.8);font-weight:bold">U</div>
<svg style="left:698px;top:57px" width="15" height="18" viewBox="0 0 15 18"><path d="M1 1H8.8L14 6.2V17H1z" fill="none" stroke="#c5c5c5" stroke-width="1.9" stroke-linejoin="miter"/><path d="M8.5 1V6.5H14" fill="#c5c5c5" stroke="#c5c5c5" stroke-width="1"/></svg>
<div class="t" style="left:723px;top:57px;font-size:16px;color:#73c991;font-style:italic">test</div>
<div class="t" style="left:787px;top:57px;font-size:15px;color:rgba(115,201,145,0.8);font-weight:bold;font-style:italic">U</div>
<svg style="left:401px;top:95px" width="18" height="12" viewBox="0 0 18 12"><path d="M7 2.9A3.3 4.3 0 1 0 7 9.1" fill="none" stroke="#a35cb6" stroke-width="2.8"/><path d="M8.6 5.8H17.8" stroke="#a35cb6" stroke-width="1.1"/><path d="M10.5 3.7V7.9M15.5 3.7V7.9M9.2 5.8H11.8M14.2 5.8H16.8" stroke="#a35cb6" stroke-width="1.5" fill="none"/></svg>
<div class="t" style="left:428px;top:93.5px;font-size:16px;color:#a9a9a9">test.cpp</div>
<svg style="left:491px;top:95px" width="8" height="12" viewBox="0 0 8 12"><path d="M1 0.7L6.3 6 1 11.3" fill="none" stroke="#a9a9a9" stroke-width="1.3"/></svg>
<div class="t" style="left:504px;top:93.5px;font-size:14px;color:#a9a9a9">...</div>
<svg style="left:1318px;top:54.8px" width="22.3" height="23" viewBox="0 0 31 32"><path d="M10.5 14.3V2.6L29.3 13.7 17.2 21.6" fill="none" stroke="#cccccc" stroke-width="2" stroke-linejoin="miter"/><ellipse cx="7.5" cy="23.6" rx="4.2" ry="6" fill="none" stroke="#cccccc" stroke-width="1.9"/><path d="M3 21.2H11.8M0.5 18.5L3.2 20.3M14.3 18.5L11.6 20.3M0.3 24.8H2.8M14.5 24.8H12M0.5 30.5L3.2 28.5M14.3 30.5L11.6 28.5" stroke="#cccccc" stroke-width="1.8" fill="none"/></svg>
<svg style="left:1344px;top:63px" width="11" height="7" viewBox="0 0 11 7"><path d="M0.8 1L5.5 5.7 10.2 1" fill="none" stroke="#cccccc" stroke-width="1.3"/></svg>
<svg style="left:1368px;top:57px" width="19" height="19" viewBox="0 0 32 32"><circle cx="16" cy="16" r="3.2" fill="none" stroke="#cccccc" stroke-width="2.4"/><path d="M13.19 6.20L13.53 2.02L18.47 2.02L18.81 6.20L20.95 7.08L24.14 4.37L27.63 7.86L24.92 11.05L25.80 13.19L29.98 13.53L29.98 18.47L25.80 18.81L24.92 20.95L27.63 24.14L24.14 27.63L20.95 24.92L18.81 25.80L18.47 29.98L13.53 29.98L13.19 25.80L11.05 24.92L7.86 27.63L4.37 24.14L7.08 20.95L6.20 18.81L2.02 18.47L2.02 13.53L6.20 13.19L7.08 11.05L4.37 7.86L7.86 4.37L11.05 7.08z" fill="none" stroke="#cccccc" stroke-width="2.4" stroke-linejoin="round"/></svg>
<svg style="left:1400px;top:56px" width="20" height="21" viewBox="0 0 20 21"><circle cx="3.7" cy="3.8" r="2.8" fill="none" stroke="#cccccc" stroke-width="1.4"/><circle cx="16.2" cy="17" r="2.8" fill="none" stroke="#cccccc" stroke-width="1.4"/><path d="M3.7 6.6v6.5c0 2 1 3 3 3h4.5M9.2 13.8l2.3 2.3-2.3 2.3M16.2 14.2V7.7c0-2-1-3-3-3H8.7M10.8 2.4L8.5 4.7l2.3 2.3" fill="none" stroke="#cccccc" stroke-width="1.4"/></svg>
<svg style="left:1434px;top:57px" width="18" height="17" viewBox="0 0 18 17"><rect x="0.75" y="0.75" width="16.5" height="15.5" rx="1.8" fill="none" stroke="#cccccc" stroke-width="1.5"/><path d="M1 8.5H17" stroke="#cccccc" stroke-width="1.5"/></svg>
<svg style="left:1467px;top:64px" width="17" height="4" viewBox="0 0 17 4"><circle cx="2" cy="2" r="1.6" fill="#cccccc"/><circle cx="8.5" cy="2" r="1.6" fill="#cccccc"/><circle cx="15" cy="2" r="1.6" fill="#cccccc"/></svg>
<svg style="left:15px;top:980px" width="13" height="17" viewBox="0 0 13 17"><path d="M1 5.3L6.6 10.3 1 15.7M12 1.2L6.6 6.2 12 11.1" fill="none" stroke="#ffffff" stroke-width="1.3"/></svg>
<div class="t" style="left:33.7px;top:980px;font-size:15px;transform:scaleX(0.911);transform-origin:0 0;color:#ffffff">SSH: slm</div>
<svg style="left:112px;top:980px" width="15" height="18" viewBox="0 0 15 18"><circle cx="3" cy="3" r="2.2" fill="none" stroke="#cccccc" stroke-width="1.3"/><circle cx="3" cy="15" r="2.2" fill="none" stroke="#cccccc" stroke-width="1.3"/><circle cx="12" cy="5" r="2.2" fill="none" stroke="#cccccc" stroke-width="1.3"/><path d="M3 5.2v7.6M12 7.2c0 3.5-2 4.5-5 4.8-2 .2-3.4.6-4 1.5" fill="none" stroke="#cccccc" stroke-width="1.3"/></svg>
<div class="t" style="left:132px;top:980px;font-size:15px;transform:scaleX(1.0);transform-origin:0 0;">master*</div>
<svg style="left:191px;top:981.5px" width="19" height="15" viewBox="0 0 19 15"><path d="M3 8.2A6.5 6.5 0 0 1 15.9 6.8M16 6.8A6.5 6.5 0 0 1 3.1 8.2M13.4 5.2L15.9 7.6 18.3 5.2M0.7 9.8L3.1 7.4 5.5 9.8" fill="none" stroke="#cccccc" stroke-width="1.4"/></svg>
<svg style="left:227px;top:981px" width="17" height="16" viewBox="0 0 17 16"><circle cx="8.2" cy="7.8" r="7.2" fill="none" stroke="#cccccc" stroke-width="1.3"/><path d="M5.2 4.8l6 6M11.2 4.8l-6 6" stroke="#cccccc" stroke-width="1.3"/></svg>
<div class="t" style="left:248px;top:980px;font-size:15px;transform:scaleX(1.06);transform-origin:0 0;">0</div>
<svg style="left:261px;top:981px" width="17" height="15" viewBox="0 0 17 15"><path d="M8.5 1L16 14H1z" fill="none" stroke="#cccccc" stroke-width="1.3" stroke-linejoin="round"/><path d="M8.5 5.5v4.5M8.5 11.2v1.4" stroke="#cccccc" stroke-width="1.4"/></svg>
<div class="t" style="left:281.4px;top:980px;font-size:15px;transform:scaleX(1.06);transform-origin:0 0;">0</div>
<svg style="left:311px;top:980.5px" width="17" height="16" viewBox="0 0 17 16"><path d="M3.5 1.5a8 8 0 0 0 0 10M13.5 1.5a8 8 0 0 1 0 10M5.7 3.5a5 5 0 0 0 0 6M11.3 3.5a5 5 0 0 1 0 6" fill="none" stroke="#cccccc" stroke-width="1.3"/><circle cx="8.5" cy="6.5" r="1.5" fill="none" stroke="#cccccc" stroke-width="1.2"/><path d="M8.5 8L5.2 15.5M8.5 8l3.3 7.5M6.3 13h4.4" fill="none" stroke="#cccccc" stroke-width="1.3"/></svg>
<div class="t" style="left:331px;top:980px;font-size:15px;transform:scaleX(1.06);transform-origin:0 0;">0</div>
<div class="t" style="left:360.5px;top:980px;font-size:15px;transform:scaleX(0.894);transform-origin:0 0;">1.8 KiB</div>
<div class="t" style="left:1078.5px;top:980px;font-size:15px;transform:scaleX(1.0);transform-origin:0 0;">行 11，列 16</div>
<div class="t" style="left:1182.7px;top:980px;font-size:15px;transform:scaleX(0.983);transform-origin:0 0;">空格: 4</div>
<div class="t" style="left:1248.7px;top:980px;font-size:15px;transform:scaleX(0.939);transform-origin:0 0;">UTF-8</div>
<div class="t" style="left:1308.3px;top:980px;font-size:15px;transform:scaleX(0.82);transform-origin:0 0;">LF</div>
<div class="t" style="left:1342.4px;top:980px;font-size:15px;transform:scaleX(1.0);transform-origin:0 0;">{ }</div>
<div class="t" style="left:1366px;top:980px;font-size:15px;transform:scaleX(1.0);transform-origin:0 0;">C++</div>
<div class="t" style="left:1413.2px;top:980px;font-size:15px;transform:scaleX(0.949);transform-origin:0 0;">Linux</div>
<svg style="left:1469px;top:982px" width="15" height="17" viewBox="0 0 15 17"><path d="M2 12.5V7a5.5 5.5 0 0 1 11 0v5.5l1.5 1.5H0.5z" fill="none" stroke="#cccccc" stroke-width="1.3" stroke-linejoin="round"/><path d="M5.5 15a2 2 0 0 0 4 0" fill="none" stroke="#cccccc" stroke-width="1.3"/></svg>
<div class="t" style="left:1161.5px;top:958.8px;font-size:30.5px;line-height:34px;color:rgba(205,205,205,0.92);-webkit-text-stroke:0;transform:scaleX(0.875);transform-origin:0 0">CSDN</div>
<div class="t" style="left:1248.5px;top:958.8px;font-size:30.5px;line-height:34px;color:rgba(205,205,205,0.92);-webkit-text-stroke:0;transform:scaleX(0.96);transform-origin:0 0">@s_little_monster</div>
<div class="a" style="left:1484px;top:988px;width:15px;height:1.5px;background:#c8c8c8;"></div>
</body></html>
